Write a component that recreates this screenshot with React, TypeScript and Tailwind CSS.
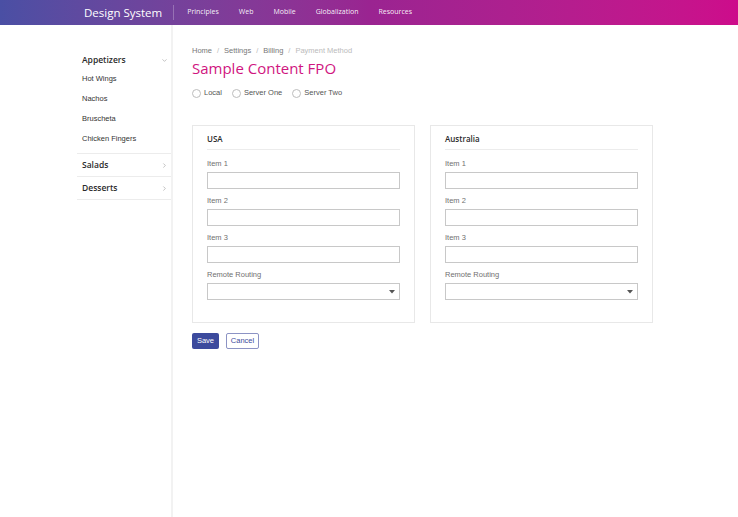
import { ChevronDown, ChevronRight } from "lucide-react";

const sans = "font-['Liberation_Sans',Arial,sans-serif]";
const head = "font-['Open_Sans',sans-serif]";

function Field({ label, select }: { label: string; select?: boolean }) {
  return (
    <div className="mb-[6px]">
      <div className={`${sans} h-[12px] mb-[2px] text-[7.5px] leading-[12px] text-[#707070]`}>{label}</div>
      <div className="h-[17px] border border-[#c8c8c8] bg-white flex items-center justify-end pr-[4px]">
        {select && (
          <svg width="6" height="4" viewBox="0 0 6 4">
            <path d="M0 0 L6 0 L3 3.5 Z" fill="#555" />
          </svg>
        )}
      </div>
    </div>
  );
}

function Card({ title }: { title: string }) {
  return (
    <div className="w-[223px] h-[198px] border border-[#e8e8e8] bg-white px-[14px]">
      <div className={`${head} pt-[7px] pb-[5px] h-[24px] text-[8px] leading-[12px] font-semibold text-[#2b2b2b] border-b border-[#ececec]`}>
        {title}
      </div>
      <div className="pt-[8px]">
        <Field label="Item 1" />
        <Field label="Item 2" />
        <Field label="Item 3" />
        <Field label="Remote Routing" select />
      </div>
    </div>
  );
}

function Radio({ label }: { label: string }) {
  return (
    <div className="flex items-center gap-[3px]">
      <span className="w-[9px] h-[9px] rounded-full border border-[#bdbdbd] bg-white" />
      <span className={`${sans} text-[7.5px] text-[#555]`}>{label}</span>
    </div>
  );
}

export default function App() {
  const nav = ["Principles", "Web", "Mobile", "Globalization", "Resources"];
  const items = ["Hot Wings", "Nachos", "Bruscheta", "Chicken Fingers"];

  return (
    <div className="w-[738px] h-[517px] flex flex-col bg-white overflow-hidden">
      {/* Top bar */}
      <div className="h-[25px] shrink-0 flex items-center bg-gradient-to-r from-[#4a4fa4] via-[#9a2491] to-[#cd0c8b] pl-[84px]">
        <div className={`${head} text-[11.5px] text-white`}>Design System</div>
        <div className="w-px h-[15px] bg-white/25 ml-[11px] mr-[13px]" />
        <div className={`${head} flex gap-[20px] text-[7px] text-white/95`}>
          {nav.map((n) => (
            <span key={n}>{n}</span>
          ))}
        </div>
      </div>

      <div className="flex-1 flex">
        {/* Sidebar */}
        <div className="w-[173px] shrink-0 border-r-2 border-[#f2f2f2] pt-[26px] pl-[77px]">
          <div className="border-b border-[#ececec] pb-[4px]">
            <div className="h-[18px] flex items-center justify-between pl-[5px] pr-[3px]">
              <span className={`${head} text-[8.5px] font-semibold text-[#2b2b2b]`}>Appetizers</span>
              <ChevronDown size={7} className="text-[#999]" />
            </div>
            {items.map((i) => (
              <div key={i} className={`${sans} h-[20px] flex items-center pl-[5px] text-[7.5px] text-[#333]`}>
                {i}
              </div>
            ))}
          </div>
          {["Salads", "Desserts"].map((s) => (
            <div key={s} className="h-[23px] border-b border-[#ececec] flex items-center justify-between pl-[5px] pr-[3px]">
              <span className={`${head} text-[8.5px] font-semibold text-[#2b2b2b]`}>{s}</span>
              <ChevronRight size={7} className="text-[#999]" />
            </div>
          ))}
        </div>

        {/* Main */}
        <div className="flex-1 pl-[19px] pt-[21px]">
          <div className={`${sans} h-[10px] flex items-center gap-[5px] text-[7.5px] text-[#777]`}>
            <span>Home</span>
            <span className="text-[#bbb]">/</span>
            <span>Settings</span>
            <span className="text-[#bbb]">/</span>
            <span>Billing</span>
            <span className="text-[#bbb]">/</span>
            <span className="text-[#bbb]">Payment Method</span>
          </div>
          <div className={`${head} text-[15px] leading-[22px] text-[#d0157f] mt-[1px]`}>Sample Content FPO</div>
          <div className="flex items-center gap-[10px] mt-[8px] h-[12px]">
            <Radio label="Local" />
            <Radio label="Server One" />
            <Radio label="Server Two" />
          </div>

          <div className="flex gap-[15px] mt-[26px]">
            <Card title="USA" />
            <Card title="Australia" />
          </div>

          <div className="flex gap-[7px] mt-[10px]">
            <button className={`${sans} w-[27px] h-[16px] rounded-[2px] bg-[#3c4a9d] text-white text-[7.5px]`}>Save</button>
            <button className={`${sans} w-[33px] h-[16px] rounded-[2px] border border-[#8c93c4] bg-white text-[#3c4a9d] text-[7.5px]`}>
              Cancel
            </button>
          </div>
        </div>
      </div>
    </div>
  );
}
